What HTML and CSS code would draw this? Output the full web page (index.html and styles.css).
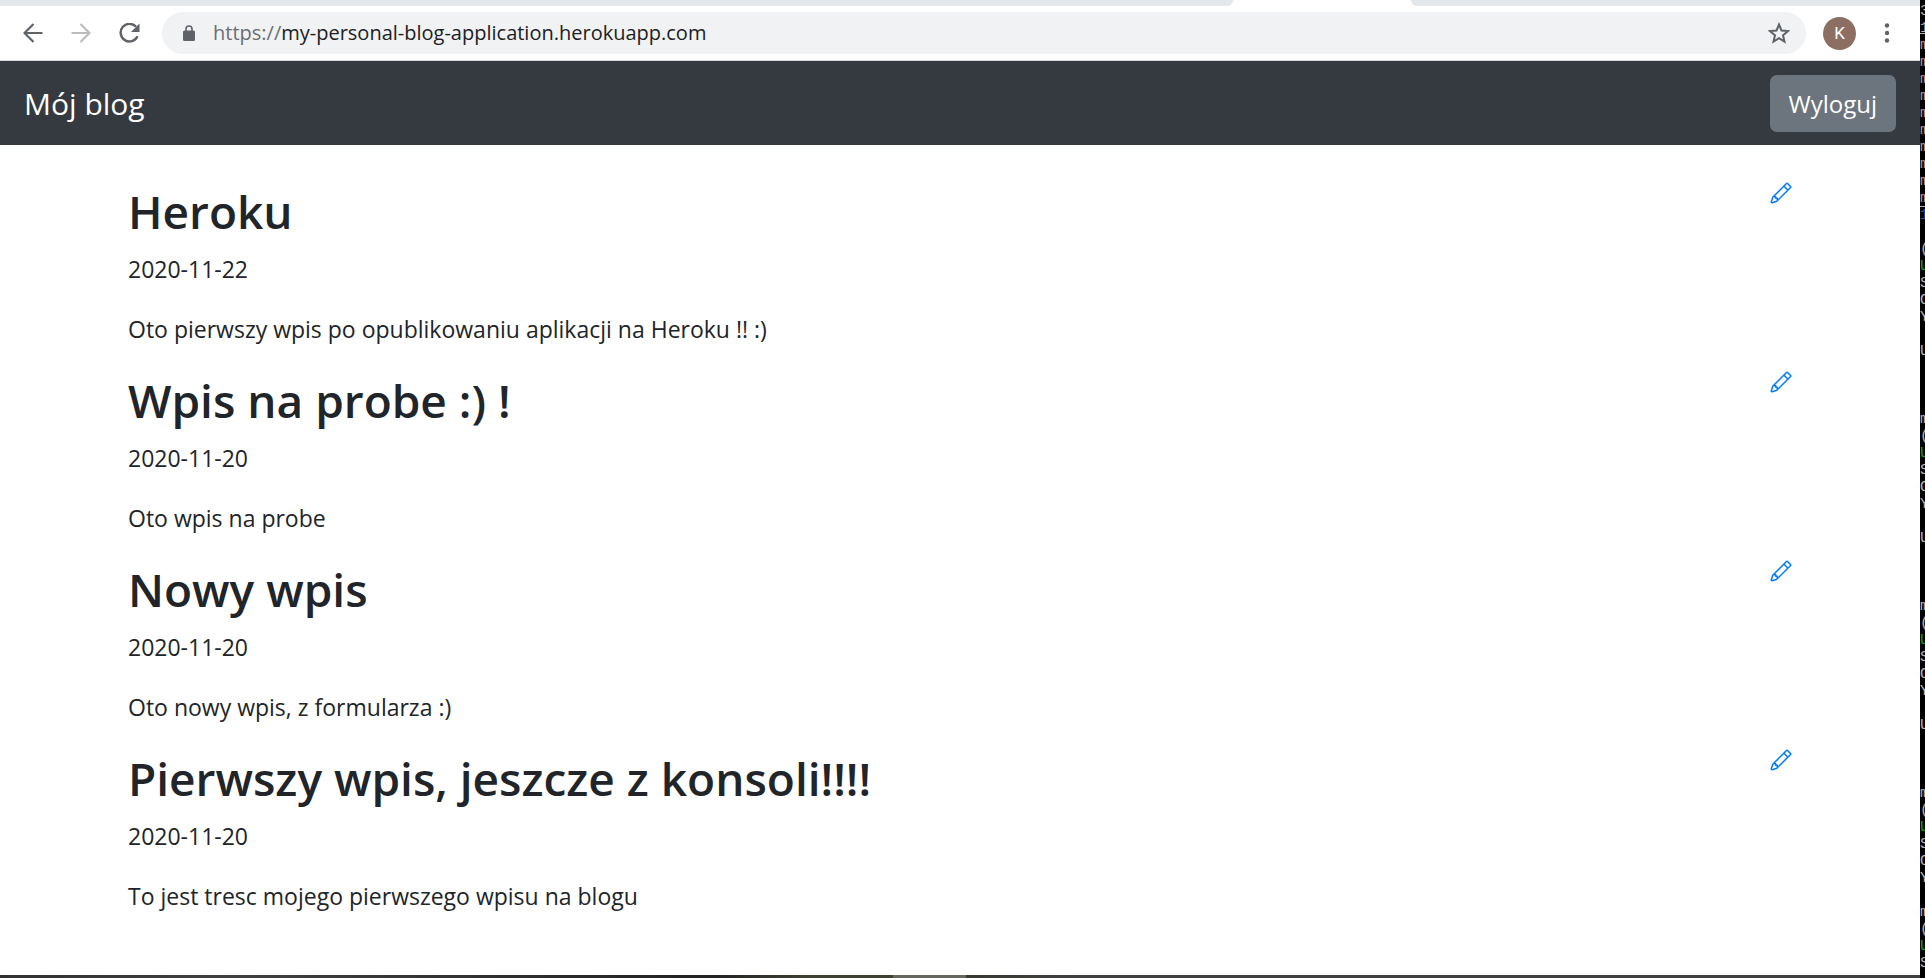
FILE: index.html
```html
<!DOCTYPE html>
<html lang="pl">
<head>
<meta charset="utf-8">
<title>Mój blog</title>
<link rel="stylesheet" href="styles.css">
</head>
<body>
<div class="screen">
  <div class="window">
    <div class="tabs"><span class="tab-rest tab-before"></span><span class="tab-rest tab-after"></span></div>
    <div class="toolbar">
      <div class="nav-buttons">
        <button class="icon-button" aria-label="Wstecz"><svg width="20" height="20" viewBox="0 0 20 20" fill="none" stroke="#5f6368" stroke-width="2.2"><path d="M19.5 10H2M10.500 1L1.500 10l9 9"/></svg></button>
        <button class="icon-button" aria-label="Dalej"><svg width="20" height="20" viewBox="0 0 20 20" fill="none" stroke="#babcbe" stroke-width="2.2"><path d="M.5 10H18M9.500 1l9 9-9 9"/></svg></button>
        <button class="icon-button" aria-label="Odśwież"><svg width="22" height="20" viewBox="0 0 22 20"><path d="M18.500 13.200A8.800 8.800 0 1 1 17 3.800" fill="none" stroke="#5f6368" stroke-width="2.400"/><path d="M20.500.5v8.500H12z" fill="#5f6368"/></svg></button>
      </div>
      <div class="address">
        <svg width="12" height="16" viewBox="0 0 12 16"><path d="M3 7V4a3 3 0 0 1 6 0v3" fill="none" stroke="#5f6368" stroke-width="1.600"/><rect y="5.500" width="12" height="10.500" rx="1.500" fill="#5f6368"/></svg>
        <span class="url"><span class="scheme">https://</span>my-personal-blog-application.herokuapp.com</span>
        <button class="icon-button" aria-label="Dodaj zakładkę"><svg width="22" height="22" viewBox="0 0 22 22"><path d="M11 2.500l2.500 6 6.500.6-5 4.200 1.500 6.200-5.500-3.400-5.500 3.400L7 13.300 2 9.100l6.500-.6z" fill="none" stroke="#5f6368" stroke-width="2"/></svg></button>
      </div>
      <button class="avatar">K</button>
      <button class="icon-button menu" aria-label="Menu"><svg width="6" height="20" viewBox="0 0 6 20" fill="#5f6368"><circle cx="3" cy="2.500" r="2.200"/><circle cx="3" cy="10" r="2.200"/><circle cx="3" cy="17.500" r="2.200"/></svg></button>
    </div>
    <header class="navbar">
      <a class="brand" href="#">Mój blog</a>
      <button class="logout">Wyloguj</button>
    </header>
    <main class="posts">
      <article class="post">
        <div><h1>Heroku</h1><p class="date">2020-11-22</p><p>Oto pierwszy wpis po opublikowaniu aplikacji na Heroku !! :)</p></div>
        <a class="edit" href="#" aria-label="Edytuj"><svg width="24" height="24" viewBox="0 0 16 16"><use href="#pencil"/></svg></a>
      </article>
      <article class="post">
        <div><h1>Wpis na probe :) !</h1><p class="date">2020-11-20</p><p>Oto wpis na probe</p></div>
        <a class="edit" href="#" aria-label="Edytuj"><svg width="24" height="24" viewBox="0 0 16 16"><use href="#pencil"/></svg></a>
      </article>
      <article class="post">
        <div><h1>Nowy wpis</h1><p class="date">2020-11-20</p><p>Oto nowy wpis, z formularza :)</p></div>
        <a class="edit" href="#" aria-label="Edytuj"><svg width="24" height="24" viewBox="0 0 16 16"><use href="#pencil"/></svg></a>
      </article>
      <article class="post">
        <div><h1>Pierwszy wpis, jeszcze z konsoli!!!!</h1><p class="date">2020-11-20</p><p>To jest tresc mojego pierwszego wpisu na blogu</p></div>
        <a class="edit" href="#" aria-label="Edytuj"><svg width="24" height="24" viewBox="0 0 16 16"><use href="#pencil"/></svg></a>
      </article>
    </main>
    <div class="taskbar"></div>
  </div>
  <pre class="terminal">3
<u>1</u>
<i>m
m
m
m
m
m
m
m
m
m</i>
<s>1</s>

(
<b>U</b>
S
O
Y

U



m
(
<b>U</b>
S
O
Y

U



m
(
<b>U</b>
S
O
Y

U



m
(
<b>U</b>
S
O
Y

m
(
<b>U</b>
S</pre>
</div>
<svg class="symbols" width="0" height="0"><symbol id="pencil" viewBox="0 0 16 16"><path fill="#007bff" fill-rule="evenodd" d="M11.293 1.293a1 1 0 0 1 1.414 0l2 2a1 1 0 0 1 0 1.414l-9 9a1 1 0 0 1-.39.242l-3 1a1 1 0 0 1-1.266-1.265l1-3a1 1 0 0 1 .242-.391l9-9zM12 2l2 2-9 9-3 1 1-3 9-9z"/><path fill="#007bff" fill-rule="evenodd" d="M12.146 6.354l-2.500-2.500.708-.708 2.500 2.500-.707.708zM3 10v.5a.5.5 0 0 0 .5.5H4v.5a.5.5 0 0 0 .5.5H5v.5a.5.5 0 0 0 .5.5H6v-1.500a.5.5 0 0 0-.5-.5H5v-.5a.5.5 0 0 0-.5-.5H3z"/></symbol></svg>
</body>
</html>
```

FILE: styles.css
```css
* { box-sizing: border-box; }
body {
  margin: 0;
  font-family: "Open Sans", "Noto Sans", sans-serif;
  font-size: 23px;
  line-height: 36px;
  color: #212529;
  background: #fff;
}
button { font: inherit; border: 0; cursor: pointer; }
.screen { display: flex; height: 100vh; overflow: hidden; }
.window { flex: 1; min-width: 0; display: flex; flex-direction: column; }
.tabs { display: flex; justify-content: space-between; height: 6px; flex: none; }
.tab-rest { background: #e4e7ea; }
.tab-before { width: 64.2%; border-bottom-right-radius: 6px; }
.tab-after { width: 26.5%; border-bottom-left-radius: 6px; }
.toolbar { display: flex; align-items: center; height: 55px; flex: none; padding: 0 30px 0 23px; border-bottom: 1px solid #d5d7d9; }
.nav-buttons { display: flex; gap: 28px; margin-right: 21px; }
.icon-button { display: flex; padding: 0; background: none; }
.address { flex: 1; display: flex; align-items: center; height: 42px; padding: 0 16px 0 21px; border-radius: 21px; background: #f0f2f4; }
.url { flex: 1; margin-left: 18px; font-size: 20px; color: #202124; }
.scheme { color: #6b6f73; }
.avatar { width: 33px; height: 33px; margin: 0 28px 0 17px; padding: 0; border-radius: 50%; background: #8d6e63; color: #fff; font-family: Roboto, sans-serif; font-size: 17px; line-height: 33px; }
.navbar { display: flex; align-items: center; justify-content: space-between; height: 84px; flex: none; padding: 0 24px; background: #343a40; }
.brand { padding-top: 2px; color: #fff; font-size: 30px; text-decoration: none; }
.logout { height: 57px; padding: 2px 19px 0; border-radius: 7px; background: #6c757d; color: #fff; font-size: 24px; }
.posts { flex: 1; padding: 36px 127px 0 128px; }
.post { display: flex; justify-content: space-between; }
.post h1 { margin: 0 0 10px; font-size: 46px; font-weight: 600; line-height: 60px; }
.post p { margin: 0 0 23px; }
.post .date { margin-bottom: 24px; }
.edit { line-height: 0; height: 24px; }
.taskbar { height: 3px; flex: none; background: linear-gradient(90deg, #303030, #404040 12%, #222 37%, #403f34 42%, #403f34 46.5%, #66655e 46.5%, #66655e 50.3%, #38372f 50.3%, #404040 56%); }
.terminal { width: 5px; flex: none; margin: 0; padding-top: 3px; overflow: hidden; background: #000; color: #b5b5b5; font-family: "Liberation Mono", monospace; font-size: 15px; line-height: 17px; }
.terminal b { color: #16a016; font-weight: 400; }
.terminal i { color: #b79a90; font-style: normal; }
.terminal s { color: #2460a8; text-decoration: overline #b5b5b5; }
.symbols { position: absolute; }
```
